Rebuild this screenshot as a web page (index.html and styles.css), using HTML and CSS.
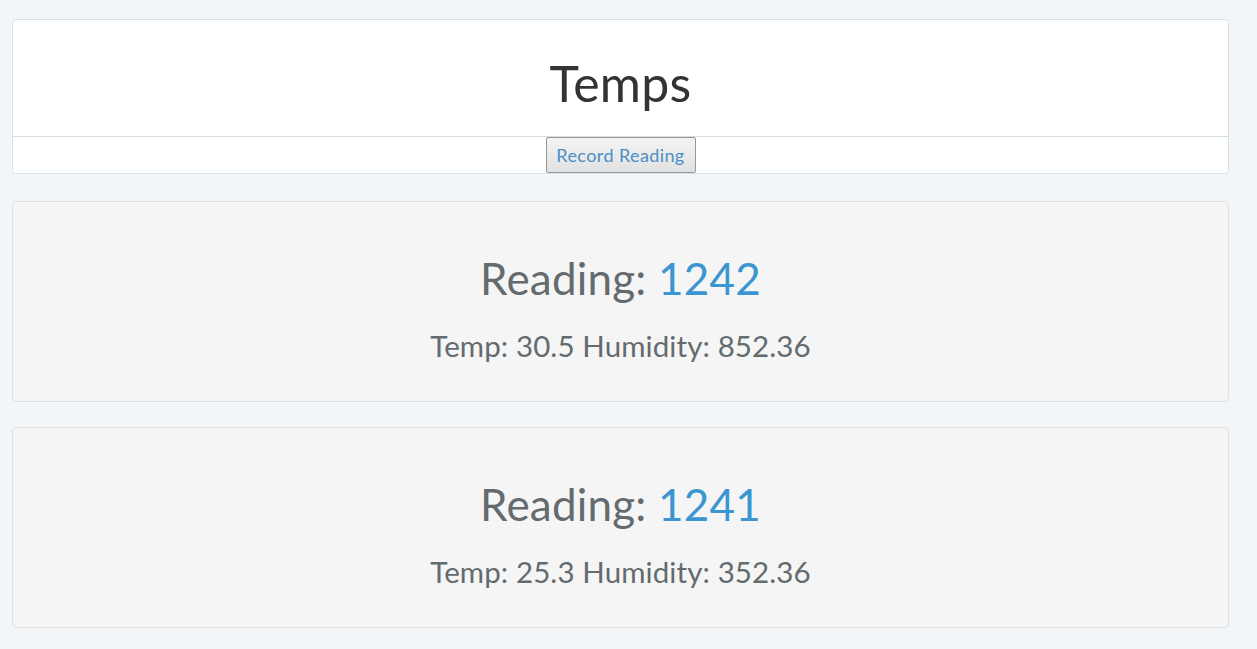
FILE: index.html
```html
<!DOCTYPE html>
<html>
<head>
<meta charset="utf-8">
<title>Temps</title>
<link rel="stylesheet" href="styles.css">
</head>
<body>
<div class="page">
  <div class="panel">
    <div class="panel-heading"><h1 class="title">Temps</h1></div>
    <div class="panel-body"><button class="record-btn" type="button">Record Reading</button></div>
  </div>
  <div class="well">
    <h2 class="reading">Reading: <span class="reading-id">1242</span></h2>
    <p class="stats">Temp: 30.5 Humidity: 852.36</p>
  </div>
  <div class="well">
    <h2 class="reading">Reading: <span class="reading-id">1241</span></h2>
    <p class="stats">Temp: 25.3 Humidity: 352.36</p>
  </div>
</div>
</body>
</html>
```

FILE: styles.css
```css
html, body {
  margin: 0;
  padding: 0;
}
body {
  background: #f3f6f9;
  font-family: "Lato", "Liberation Sans", sans-serif;
  color: #636b6f;
}
.page {
  padding: 19px 28px 20px 12px;
  display: flex;
  flex-direction: column;
}
.panel {
  background: #fff;
  border: 1px solid #d8e1e7;
  border-radius: 4px;
  margin-bottom: 27px;
}
.panel-heading {
  height: 116px;
  border-bottom: 1px solid #d3dde4;
  display: flex;
  align-items: center;
  justify-content: center;
}
.title {
  margin: 0;
  font-weight: 400;
  font-size: 50px;
  line-height: 1;
  color: #333;
  padding-top: 10px;
  letter-spacing: 0.3px;
}
.panel-body {
  display: flex;
  justify-content: center;
  height: 36px;
}
.record-btn {
  font-family: inherit;
  font-size: 18px;
  letter-spacing: 0.4px;
  color: #4c8fc6;
  width: 150px;
  height: 36px;
  background: linear-gradient(#f3f3f3, #e2e2e2);
  border: 1px solid #979797;
  border-radius: 2px;
  padding: 0;
}
.well {
  background: #f5f5f5;
  border: 1px solid #e1e1e1;
  border-radius: 4px;
  height: 199px;
  margin-bottom: 25px;
  display: flex;
  flex-direction: column;
  align-items: center;
  box-sizing: content-box;
}
.reading {
  margin: 51px 0 0;
  font-weight: 400;
  font-size: 44px;
  line-height: 50px;
  color: #636b6f;
  letter-spacing: 0.2px;
}
.reading-id {
  color: #3a95d0;
}
.stats {
  margin: 25px 0 0;
  font-size: 29.5px;
  line-height: 36px;
  color: #636b6f;
  letter-spacing: 0.1px;
}
```
